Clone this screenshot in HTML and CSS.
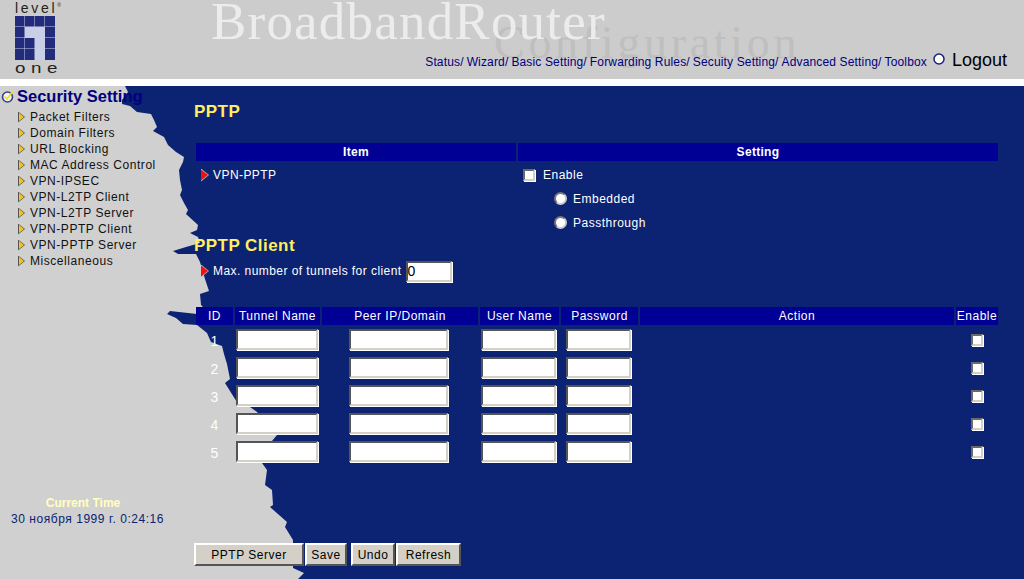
FILE: index.html
```html
<!DOCTYPE html>
<html lang="en">
<head>
<meta charset="utf-8">
<title>PPTP</title>
<link rel="stylesheet" href="styles.css">
</head>
<body>
<header class="top">
  <div class="logo">
    <span class="logo-word">level<sup class="reg">®</sup></span>
    <svg class="logo-mark" width="40" height="44" viewBox="0 0 40 44">
      <rect width="40" height="44" fill="#c8cfe6"/>
      <g fill="#232c7c">
        <rect y="0" width="9.5" height="10.5"/><rect x="10" width="9.5" height="10.5"/><rect x="20" width="9.5" height="10.5"/><rect x="30" width="10" height="10.5"/>
        <rect y="11" width="9.5" height="10.5"/><rect x="30" y="11" width="10" height="10.5"/>
        <rect y="22" width="9.5" height="10.5"/><rect x="10" y="22" width="9.5" height="10.5"/><rect x="30" y="22" width="10" height="10.5"/>
        <rect y="33" width="9.5" height="11"/><rect x="10" y="33" width="9.5" height="11"/><rect x="30" y="33" width="10" height="11"/>
      </g>
    </svg>
    <span class="logo-word logo-one">one</span>
  </div>
  <div class="title">
    <span class="title-b">Configuration</span>
    <span class="title-a">BroadbandRouter</span>
  </div>
  <nav class="topnav">
    <a>Status/</a><a>Wizard/</a><a>Basic Setting/</a><a>Forwarding Rules/</a><a>Secuity Setting/</a><a>Advanced Setting/</a><a>Toolbox</a>
    <svg class="ring" width="12" height="12" viewBox="0 0 12 12"><circle cx="6" cy="6" r="5" fill="#fff" stroke="#16227a" stroke-width="1.5"/></svg>
    <a class="logout">Logout</a>
  </nav>
</header>
<div class="strip"></div>
<main class="main">
  <svg class="tear" width="320" height="493" viewBox="0 86 320 493">
    <path fill="#d0d0d0" d="M0 86H125L128 92 122 100 122 104 130 106 137 112 151 114 154 120 157 127 153 131 164 137 168 145 176 152 184 157 183 162 179 170 180 180 182 190 180 195 184 203 188 210 186 214 198 225 197 230 190 233 198 237 200 243 186 247 173 251 178 254 196 254 200 262 205 279 209 291 200 294 201 305 206 310 197 314 170 311 167 314 176 318 183 324 197 325 207 333 211 342 222 346 224 354 227 364 230 379 225 383 240 407 250 407 257 412 277 435 272 441 262 463 267 470 265 485 272 490 273 505 270 507 287 522 285 527 293 540 293 568 304 573 298 579H0Z"/>
  </svg>
  <aside class="side">
    <h2 class="side-title">
      <svg class="check" width="15" height="15" viewBox="0 0 15 15"><circle cx="6.5" cy="8" r="5" fill="#f4f4f4" stroke="#3a4088" stroke-width="1.6"/><path d="M3.5 7.5L6 10 12 2" fill="none" stroke="#f2e020" stroke-width="1.6"/></svg>
      Security Setting
    </h2>
    <ul class="menu">
      <li><i class="tri"></i>Packet Filters</li>
      <li><i class="tri"></i>Domain Filters</li>
      <li><i class="tri"></i>URL Blocking</li>
      <li><i class="tri"></i>MAC Address Control</li>
      <li><i class="tri"></i>VPN-IPSEC</li>
      <li><i class="tri"></i>VPN-L2TP Client</li>
      <li><i class="tri"></i>VPN-L2TP Server</li>
      <li><i class="tri"></i>VPN-PPTP Client</li>
      <li><i class="tri"></i>VPN-PPTP Server</li>
      <li><i class="tri"></i>Miscellaneous</li>
    </ul>
    <div class="clock">
      <div class="clock-label">Current Time</div>
      <div class="clock-value">30 ноября 1999 г. 0:24:16</div>
    </div>
  </aside>
  <section class="content">
    <h1 class="h1">PPTP</h1>
    <div class="head-row">
      <div class="th b">Item</div><div class="th b">Setting</div>
    </div>
    <div class="two">
      <div class="label"><i class="red"></i>VPN-PPTP</div>
      <div class="opts">
        <label class="opt"><span class="box"></span>Enable</label>
        <label class="opt sub"><span class="radio"></span>Embedded</label>
        <label class="opt sub"><span class="radio"></span>Passthrough</label>
      </div>
    </div>
    <h1 class="h2">PPTP Client</h1>
    <div class="label maxrow"><i class="red"></i>Max. number of tunnels for client<span class="inp inp-max">0</span></div>
    <div class="grid">
      <div class="th">ID</div><div class="th">Tunnel Name</div><div class="th">Peer IP/Domain</div><div class="th">User Name</div><div class="th">Password</div><div class="th">Action</div><div class="th">Enable</div>

      <div class="id">1</div><div class="c"><span class="inp w1"></span></div><div class="c"><span class="inp w2"></span></div><div class="c"><span class="inp w3"></span></div><div class="c"><span class="inp w4"></span></div><div></div><div class="c"><span class="box"></span></div>
      <div class="id">2</div><div class="c"><span class="inp w1"></span></div><div class="c"><span class="inp w2"></span></div><div class="c"><span class="inp w3"></span></div><div class="c"><span class="inp w4"></span></div><div></div><div class="c"><span class="box"></span></div>
      <div class="id">3</div><div class="c"><span class="inp w1"></span></div><div class="c"><span class="inp w2"></span></div><div class="c"><span class="inp w3"></span></div><div class="c"><span class="inp w4"></span></div><div></div><div class="c"><span class="box"></span></div>
      <div class="id">4</div><div class="c"><span class="inp w1"></span></div><div class="c"><span class="inp w2"></span></div><div class="c"><span class="inp w3"></span></div><div class="c"><span class="inp w4"></span></div><div></div><div class="c"><span class="box"></span></div>
      <div class="id">5</div><div class="c"><span class="inp w1"></span></div><div class="c"><span class="inp w2"></span></div><div class="c"><span class="inp w3"></span></div><div class="c"><span class="inp w4"></span></div><div></div><div class="c"><span class="box"></span></div>
    </div>
    <div class="buttons">
      <span class="btn b1">PPTP Server</span><span class="btn b2">Save</span><span class="btn b3">Undo</span><span class="btn b4">Refresh</span>
    </div>
  </section>
</main>
</body>
</html>
```
FILE: styles.css
```css
* { box-sizing: border-box; }
html, body { margin: 0; padding: 0; height: 579px; overflow: hidden; }
body { font-family: "Liberation Sans", Arial, sans-serif; font-size: 12px; background: #fff; }

.top { height: 79px; background: #cccccc; position: relative; display: flex; align-items: flex-start; }
.logo { width: 70px; padding: 2px 0 0 15px; display: flex; flex-direction: column; }
.logo-word { font-size: 14px; line-height: 13px; letter-spacing: 2.7px; color: #222; height: 13px; white-space: nowrap; }
.logo-one { font-size: 15px; letter-spacing: 4.5px; transform: scaleX(1.25); transform-origin: left center; }
.logo-mark { display: block; margin: 1px 0 1px 0; }
.reg { font-size: 5px; line-height: 0; vertical-align: 6px; letter-spacing: 0; }
.title { position: absolute; inset: 0; }
.title-a { position: absolute; left: 211px; top: 0; font: 53px/42px "Liberation Serif", serif; color: #ececec; letter-spacing: 1.2px; white-space: nowrap; }
.title-b { position: absolute; left: 494px; top: 18px; font: 46px/50px "Liberation Serif", serif; color: #bfbfbf; letter-spacing: 3.7px; white-space: nowrap; }
.topnav { position: absolute; right: 17px; top: 52px; color: #000080; white-space: nowrap; display: flex; align-items: center; gap: 3px; height: 20px; letter-spacing: .15px; }
.ring { margin-left: 3px; margin-top: -6px; }
.logout { font-size: 18px; color: #000; margin-left: 4px; margin-top: -4px; letter-spacing: 0; }

.strip { height: 7px; background: #fff; }
.main { height: 493px; background: #0c2272; position: relative; display: flex; overflow: hidden; }
.tear { position: absolute; left: 0; top: 0; }

.side { width: 194px; position: relative; flex: none; }
.side-title { margin: 0; height: 23px; padding: 0 0 3px 1px; font-size: 16.5px; font-weight: bold; line-height: 20px; color: #000080; display: flex; align-items: center; gap: 1px; white-space: nowrap; }
.menu { list-style: none; margin: 0; padding: 0 0 0 18px; }
.menu li { height: 16px; line-height: 16px; color: #111; letter-spacing: .55px; display: flex; align-items: center; white-space: nowrap; }
.tri { position: relative; width: 7px; height: 11px; margin-right: 5px; background: #555; clip-path: polygon(0 0, 100% 50%, 0 100%); }
.tri::after { content: ""; position: absolute; left: 1px; top: 1.5px; width: 5px; height: 8px; background: #f5c518; clip-path: polygon(0 0, 100% 50%, 0 100%); }
.clock { position: absolute; left: 0; top: 409px; width: 175px; text-align: center; }
.clock-label { font-weight: bold; color: #ffffc0; height: 16px; line-height: 16px; padding-right: 9px; }
.clock-value { color: #0c2272; height: 16px; line-height: 16px; letter-spacing: .55px; }

.content { position: relative; flex: 1; color: #fff; }
.h1, .h2 { margin: 0; font-size: 17px; font-weight: bold; color: #ffef60; line-height: 20px; letter-spacing: .45px; }
.h1 { padding-top: 16px; height: 57px; }
.h2 { height: 23px; margin-top: 3px; }
.th { background: #000094; color: #fff; height: 18px; line-height: 18px; text-align: center; letter-spacing: .5px; white-space: nowrap; }
.th.b { font-weight: bold; letter-spacing: .3px; line-height: 19px; }
.head-row { display: grid; grid-template-columns: 320px 480px; gap: 2px; margin-left: 2px; }
.two { display: grid; grid-template-columns: 322px 1fr; margin-left: 2px; height: 72px; padding-top: 2px; }
.label { letter-spacing: .44px; display: flex; align-items: center; height: 24px; white-space: nowrap; }
.red { position: relative; width: 8px; height: 13px; margin: 0 4px 0 5px; background: #b8b8b8; clip-path: polygon(0 0, 100% 50%, 0 100%); }
.red::after { content: ""; position: absolute; left: 0; top: 1px; width: 7px; height: 11px; background: #f01010; clip-path: polygon(0 0, 100% 50%, 0 100%); }
.opts { display: flex; flex-direction: column; }
.opt { height: 24px; display: flex; align-items: center; letter-spacing: .5px; padding-left: 5px; gap: 8px; }
.opt.sub { padding-left: 36px; gap: 6px; }
.box { display: block; width: 12px; height: 12px; background: #fff; border: 2px solid; border-color: #6a6a6a #d4d0c8 #d4d0c8 #6a6a6a; box-shadow: 1px 1px 0 #fff; }
.radio { display: block; width: 13px; height: 13px; margin-top: -2px; border-radius: 50%; background: #fff; border: 2px solid; border-color: #777 #ccc #ccc #777; }
.inp { display: block; background: #fff; height: 21px; border: 2px solid; border-color: #555 #d4d0c8 #d4d0c8 #555; box-shadow: 1px 1px 0 #fff; }
.maxrow { margin-left: 2px; }
.inp-max { width: 46px; color: #000; margin-left: 4px; font-size: 14px; line-height: 17px; letter-spacing: 0; }
.grid { display: grid; grid-template-columns: 37px 85px 156px 79px 77px 314px 42px; column-gap: 2px; margin: 24px 0 0 2px; grid-template-rows: 18px repeat(5, 28px); }
.id { display: flex; align-items: center; justify-content: center; font-size: 14px; color: #fff; padding-top: 4px; }
.c { display: flex; align-items: center; justify-content: center; padding-top: 1px; }
.c .box { margin-top: 1px; }
.w1 { width: 82px; margin-left: -1px; } .w2 { width: 99px; margin-left: -4px; } .w3 { width: 75px; margin-left: -3px; } .w4 { width: 65px; margin-left: -3px; }
.buttons { position: absolute; left: 0; top: 457px; display: flex; gap: 1px; }
.btn { display: block; height: 23px; line-height: 20px; text-align: center; background: #d4d0c8; color: #000; letter-spacing: .5px; border: 2px solid; border-color: #fff #555 #555 #fff; }
.b1 { width: 110px; } .b2 { width: 42px; } .b3 { width: 44px; margin-left: 3px; } .b4 { width: 65px; }
```
